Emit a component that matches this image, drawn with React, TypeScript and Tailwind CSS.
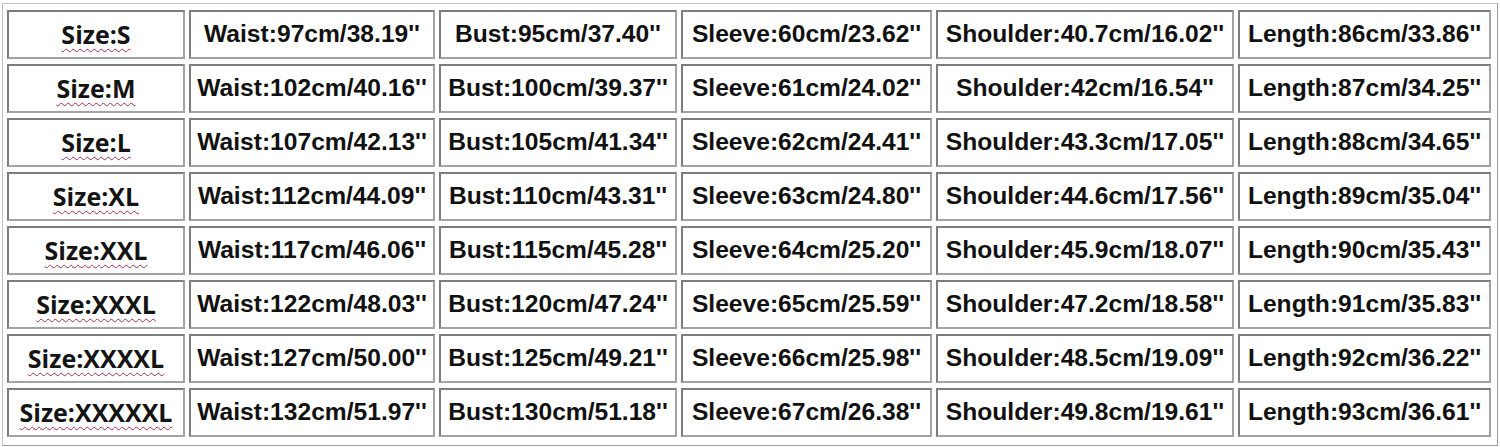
import React from "react";

const rows = [
  ["S", "97cm/38.19", "95cm/37.40", "60cm/23.62", "40.7cm/16.02", "86cm/33.86"],
  ["M", "102cm/40.16", "100cm/39.37", "61cm/24.02", "42cm/16.54", "87cm/34.25"],
  ["L", "107cm/42.13", "105cm/41.34", "62cm/24.41", "43.3cm/17.05", "88cm/34.65"],
  ["XL", "112cm/44.09", "110cm/43.31", "63cm/24.80", "44.6cm/17.56", "89cm/35.04"],
  ["XXL", "117cm/46.06", "115cm/45.28", "64cm/25.20", "45.9cm/18.07", "90cm/35.43"],
  ["XXXL", "122cm/48.03", "120cm/47.24", "65cm/25.59", "47.2cm/18.58", "91cm/35.83"],
  ["XXXXL", "127cm/50.00", "125cm/49.21", "66cm/25.98", "48.5cm/19.09", "92cm/36.22"],
  ["XXXXXL", "132cm/51.97", "130cm/51.18", "67cm/26.38", "49.8cm/19.61", "93cm/36.61"],
];

const labels = ["Waist", "Bust", "Sleeve", "Shoulder", "Length"];

const cell =
  "flex items-center justify-center h-[49px] bg-white border-2 border-t-[#7d7d7d] border-l-[#7d7d7d] border-b-[#a3a3a3] border-r-[#a3a3a3]";

export default function App() {
  return (
    <div className="w-[1500px] h-[447px] bg-white pl-[2px] pt-[3px]">
      <div className="w-[1496px] h-[443px] border border-t-[#c4c4c4] border-l-[#c4c4c4] border-b-[#9a9a9a] border-r-[#9a9a9a] pl-[4px] pt-[6px]">
        <div className="grid grid-cols-[178px_246px_238px_251px_298px_253px] gap-x-[4px] gap-y-[5px]">
          {rows.map((r) => (
            <React.Fragment key={r[0]}>
              <div className={cell}>
                <span className="font-['Open_Sans',sans-serif] font-bold text-[25px] leading-none text-[#141414] underline decoration-wavy decoration-[#a0305a] decoration-1 underline-offset-[4px]">
                  Size:{r[0]}
                </span>
              </div>
              {labels.map((l, i) => (
                <div key={l} className={cell}>
                  <span className="font-['Liberation_Sans',Arial,sans-serif] font-bold text-[24.6px] leading-none text-[#111]">
                    {l}:{r[i + 1]}''
                  </span>
                </div>
              ))}
            </React.Fragment>
          ))}
        </div>
      </div>
    </div>
  );
}
